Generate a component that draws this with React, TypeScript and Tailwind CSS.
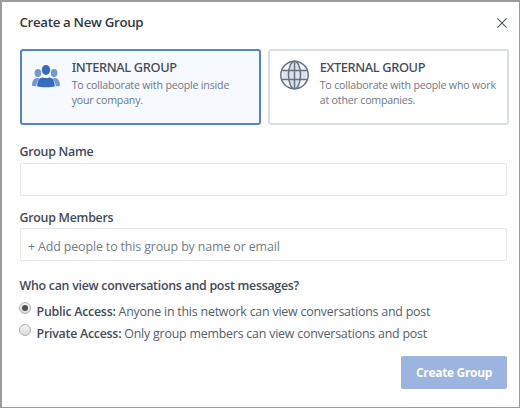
import { useState, type ReactNode } from "react";

function PeopleIcon() {
  return (
    <svg width="28" height="23" viewBox="0 0 28 23" className="block">
      <g fill="#7398d2">
        <ellipse cx="5.9" cy="8" rx="3.3" ry="4" />
        <ellipse cx="22.1" cy="8" rx="3.3" ry="4" />
        <path d="M0 20.6c0-4.600 2-7.600 5.200-7.600 1 0 1.900.3 2.700.9C5.500 15.300 4.500 17.700 4.300 21.400 2.600 21.400 1.100 21.200 0 20.600z" />
        <path d="M28 20.600c0-4.600-2-7.600-5.200-7.600-1 0-1.900.3-2.700.9 2.400 1.400 3.400 3.800 3.600 7.500 1.700 0 3.200-.2 4.300-.8z" />
      </g>
      <g fill="#376bbd">
        <ellipse cx="14" cy="5" rx="4.200" ry="5" />
        <path d="M5.200 21.200c0-5.600 2.400-8.800 5.900-8.800 1.800.9 4 .9 5.800 0 3.500 0 5.900 3.200 5.900 8.800-3 1.300-14.600 1.300-17.600 0z" />
      </g>
    </svg>
  );
}

function GlobeIcon() {
  return (
    <svg width="30" height="30" viewBox="0 0 30 30" fill="none" stroke="#667380" strokeWidth="1.500" className="block">
      <circle cx="14.500" cy="15" r="13.700" fill="#f2f4f7" />
      <path d="M3 10.500h23v9H3z" fill="#dde1e8" stroke="none" />
      <ellipse cx="14.500" cy="15" rx="6" ry="13.700" fill="#dde1e8" />
      <path d="M14.500 1.300v27.400M1.700 10.500h25.600M1.700 19.500h25.600" />
    </svg>
  );
}

type CardProps = {
  selected: boolean;
  icon: ReactNode;
  title: string;
  children: ReactNode;
  onSelect: () => void;
};

function GroupCard({ selected, icon, title, children, onSelect }: CardProps) {
  return (
    <button
      type="button"
      onClick={onSelect}
      className={
        "flex h-[76px] items-start rounded-[3px] border-2 pt-2 pl-[10px] text-left " +
        (selected ? "border-[#5483c8] bg-[#f6faff]" : "border-[#d9dee5] bg-white")
      }
    >
      <span className="w-[39.7px] shrink-0">{icon}</span>
      <span className="block whitespace-nowrap">
        <span className="block font-['Noto_Sans',sans-serif] text-[12.8px] leading-4 font-medium tracking-[-0.36px] text-[#434b57]">
          {title}
        </span>
        <span className="mt-[3px] block text-[10.6px] leading-[15px] tracking-[-0.17px] text-[#6f7782]">
          {children}
        </span>
      </span>
    </button>
  );
}

type AccessProps = { checked: boolean; label: string; text: string; onSelect: () => void };

function AccessOption({ checked, label, text, onSelect }: AccessProps) {
  return (
    <label className="flex h-[22px] items-start whitespace-nowrap" onClick={onSelect}>
      <span className="mr-[5px] -ml-px flex size-3 shrink-0 items-center justify-center rounded-full border border-[#b0b0b0] bg-linear-to-b from-[#f2f2f2] to-[#dedede]">
        {checked && <span className="size-[6px] rounded-full bg-[#505050]" />}
      </span>
      <span className="pt-px pl-[0.600px] text-[12.4px] leading-[18px] tracking-[-0.21px] text-[#555e69]">
        <b className="font-semibold tracking-[-0.26px] text-[#434b57]">{label}</b> {text}
      </span>
    </label>
  );
}

const labelClass = "-ml-[0.5px] block text-[12.4px] leading-[18px] font-semibold tracking-[-0.27px] text-[#434b57]";
const inputClass =
  "block h-[33px] w-full rounded-[2px] border border-[#e5e6e8] bg-white px-[7px] text-[12.4px] tracking-[-0.12px] text-[#555e69] outline-none placeholder:text-[#737c87] placeholder:opacity-100";

export default function App() {
  const [kind, setKind] = useState("internal");
  const [access, setAccess] = useState("public");
  return (
    <div className="h-[408px] w-[520px] overflow-hidden bg-[#9b9b9b] pt-[2px] pr-px pb-px pl-[2px] font-['Open_Sans','Noto_Sans',sans-serif]">
      <div className="flex h-full flex-col bg-white pr-[12px] pl-[18px]">
        <div className="flex h-[47px] items-start justify-between pt-[10px]">
          <h1 className="-ml-[0.5px] text-[13.3px] leading-5 font-semibold tracking-[-0.33px] text-[#333940]">Create a New Group</h1>
          <button type="button" aria-label="Close">
            <svg width="10" height="10" viewBox="0 0 10 10" stroke="#4d545c" strokeWidth="1.100" className="mt-[6px] block">
              <path d="M.4.4l9.200 9.200M9.600.4L.4 9.600" />
            </svg>
          </button>
        </div>
        <div className="-mr-[2px] grid grid-cols-[241px_241px] gap-[7px]">
          <GroupCard
            selected={kind === "internal"}
            icon={<span className="block pt-[6px]"><PeopleIcon /></span>}
            title="INTERNAL GROUP"
            onSelect={() => setKind("internal")}
          >
            To collaborate with people inside
            <br />
            your company.
          </GroupCard>
          <GroupCard
            selected={kind === "external"}
            icon={<span className="block pt-px"><GlobeIcon /></span>}
            title="EXTERNAL GROUP"
            onSelect={() => setKind("external")}
          >
            To collaborate with people who work
            <br />
            at other companies.
          </GroupCard>
        </div>
        <div className="mt-[18px]">
          <label className={labelClass}>Group Name</label>
          <input className={inputClass + " mt-[2px]"} />
        </div>
        <div className="mt-[13px]">
          <label className={labelClass}>Group Members</label>
          <input className={inputClass + " mt-px pt-[3px]"} placeholder="+ Add people to this group by name or email" />
        </div>
        <div className="mt-4">
          <p className={labelClass}>Who can view conversations and post messages?</p>
          <div className="mt-[7px]">
            <AccessOption
              checked={access === "public"}
              label="Public Access:"
              text="Anyone in this network can view conversations and post"
              onSelect={() => setAccess("public")}
            />
            <AccessOption
              checked={access === "private"}
              label="Private Access:"
              text="Only group members can view conversations and post"
              onSelect={() => setAccess("private")}
            />
          </div>
        </div>
        <button
          type="button"
          className="mt-[10px] h-[33px] w-[106px] self-end rounded-[2px] bg-[#9cb5de] pt-px text-[12px] font-bold tracking-[-0.33px] text-white"
        >
          Create Group
        </button>
      </div>
    </div>
  );
}
